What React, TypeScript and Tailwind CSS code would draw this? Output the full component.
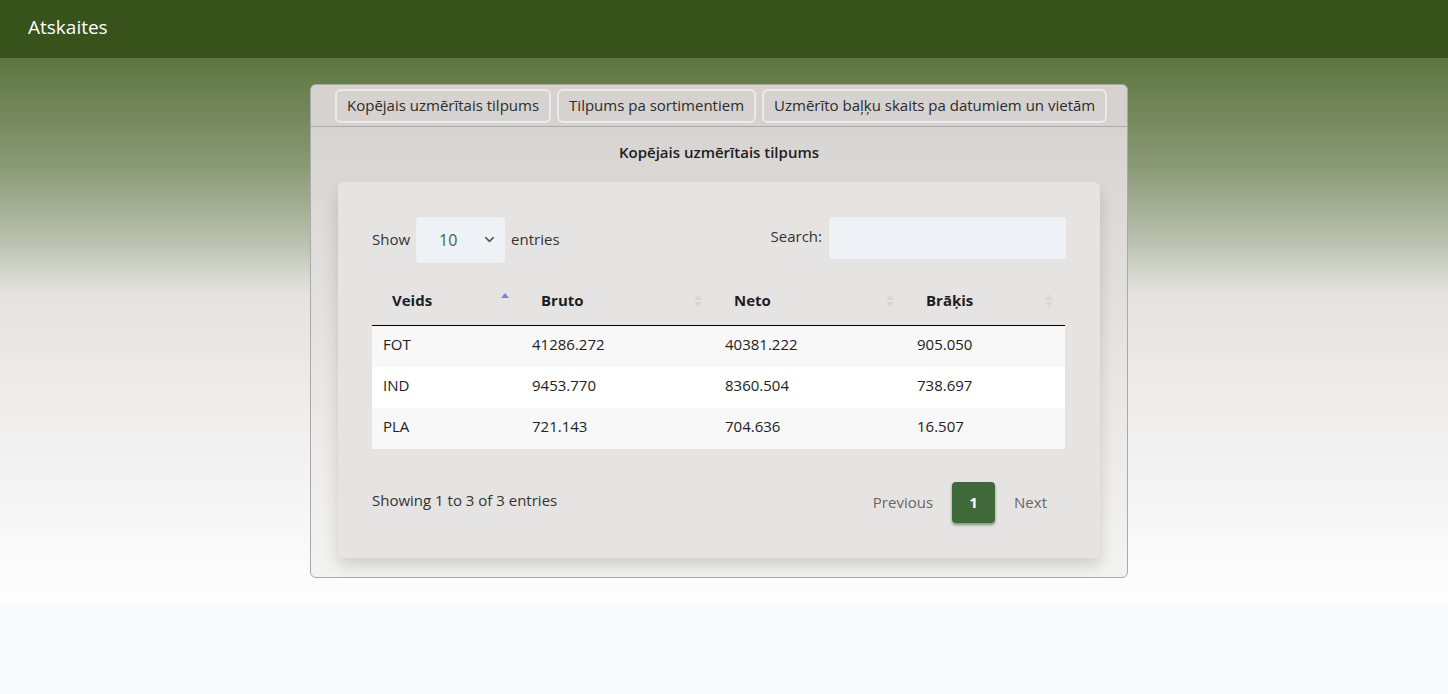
import { ChevronDown } from "lucide-react";

const rows = [
  { veids: "FOT", bruto: "41286.272", neto: "40381.222", brakis: "905.050" },
  { veids: "IND", bruto: "9453.770", neto: "8360.504", brakis: "738.697" },
  { veids: "PLA", bruto: "721.143", neto: "704.636", brakis: "16.507" },
];

const tabs = [
  "Kopējais uzmērītais tilpums",
  "Tilpums pa sortimentiem",
  "Uzmērīto baļķu skaits pa datumiem un vietām",
];

function SortIcon({ active }: { active?: boolean }) {
  if (active) {
    return (
      <svg width="10" height="16" viewBox="0 0 10 16" className="shrink-0 -mt-[5px]">
        <path d="M5 3 L9 8 L1 8 Z" fill="#7f7fdc" />
      </svg>
    );
  }
  return (
    <svg width="10" height="16" viewBox="0 0 10 16" className="shrink-0">
      <path d="M5 1 L9 7 L1 7 Z" fill="#d9d8d6" />
      <path d="M5 15 L9 9 L1 9 Z" fill="#d9d8d6" />
    </svg>
  );
}

export default function App() {
  const cols = [
    { label: "Veids", w: "w-[149px]", active: true },
    { label: "Bruto", w: "w-[193px]" },
    { label: "Neto", w: "w-[192px]" },
    { label: "Brāķis", w: "w-[159px]" },
  ];

  return (
    <div
      className="min-h-screen bg-[#f8f9fa] text-[#212529]"
      style={{ fontFamily: '"Open Sans", "Noto Sans", sans-serif' }}
    >
      {/* Navbar */}
      <header className="h-[58px] bg-[#37521a] flex items-center px-[28px] pb-[3px]">
        <span className="text-white text-[19px]">Atskaites</span>
      </header>

      {/* Gradient area */}
      <main className="h-[546px] pt-[26px] bg-[linear-gradient(to_bottom,#5e7540_0%,#8a9a76_20%,#bcc2b1_34%,#e4e3df_43%,#eae9e7_55%,#f1f0f0_70%,#fefefe_100%)]">
        <div className="ml-[310px] w-[818px] h-[494px] border border-[#aaa9a7] rounded-[6px] bg-[linear-gradient(to_bottom,#d5d1ce_0%,#dedbd9_30%,#e8e7e5_60%,#f3f3f2_100%)] overflow-hidden">
          {/* Tabs */}
          <div className="h-[42px] border-b border-[#aaa9a7] flex items-center gap-[6px] pl-[24px] bg-[#d6d2cf]">
            {tabs.map((t) => (
              <button
                key={t}
                className="h-[34px] px-[10px] border-2 border-[#ecebea] rounded-[6px] text-[15px] text-[#2c2c2c]"
              >
                {t}
              </button>
            ))}
          </div>

          <h2 className="text-center font-semibold text-[15px] text-[#1d1d24] mt-[14px]">
            Kopējais uzmērītais tilpums
          </h2>

          {/* Inner card */}
          <div className="mx-[27px] mt-[18px] h-[376px] rounded-[6px] bg-[#e6e4e2] shadow-[0_8px_16px_rgba(0,0,0,0.15)] px-[34px] pt-[35px]">
            <div className="flex justify-between">
              <div className="flex items-center gap-[6px] text-[15px] text-[#333] h-[46px]">
                <span>Show</span>
                <div className="w-[89px] h-[46px] bg-[#eef2f6] rounded-[4px] flex items-center justify-between pl-[23px] pr-[8px]">
                  <span className="text-[#3d6a3a] text-[16px]">10</span>
                  <ChevronDown size={15} strokeWidth={2.5} className="text-[#3d6a3a]" />
                </div>
                <span>entries</span>
              </div>
              <div className="flex items-start gap-[7px] text-[15px] text-[#333]">
                <span className="leading-[38px]">Search:</span>
                <div className="w-[237px] h-[42px] bg-[#eef2f6] rounded-[4px]" />
              </div>
            </div>

            {/* Table */}
            <div className="mt-[17px] w-[693px]">
              <div className="flex h-[46px] border-b border-black text-[15px] font-bold text-[#1d1d24]">
                {cols.map((c) => (
                  <div
                    key={c.label}
                    className={`${c.w} flex items-center justify-between pl-[20px] pr-[11px] pb-[3px]`}
                  >
                    <span>{c.label}</span>
                    <SortIcon active={c.active} />
                  </div>
                ))}
              </div>
              {rows.map((r, i) => (
                <div
                  key={r.veids}
                  className={`flex h-[41px] items-center pb-[3px] text-[15px] text-[#222] ${
                    i % 2 === 0 ? "bg-[#f8f8f8]" : "bg-white"
                  }`}
                >
                  <div className="w-[149px] pl-[11px]">{r.veids}</div>
                  <div className="w-[193px] pl-[11px]">{r.bruto}</div>
                  <div className="w-[192px] pl-[11px]">{r.neto}</div>
                  <div className="w-[159px] pl-[11px]">{r.brakis}</div>
                </div>
              ))}
            </div>

            {/* Footer */}
            <div className="mt-[33px] flex items-center justify-between w-[693px]">
              <span className="text-[15px] text-[#333] pb-[3px]">Showing 1 to 3 of 3 entries</span>
              <div className="flex items-center text-[15px] text-[#666] pr-[8px]">
                <span className="px-[10px] py-[8px]">Previous</span>
                <span className="mx-[9px] w-[43px] h-[41px] rounded-[4px] bg-[#3e6a3a] text-white font-bold flex items-center justify-center shadow-[0_2px_3px_rgba(0,0,0,0.4)]">
                  1
                </span>
                <span className="px-[10px] py-[8px]">Next</span>
              </div>
            </div>
          </div>
        </div>
      </main>
    </div>
  );
}
